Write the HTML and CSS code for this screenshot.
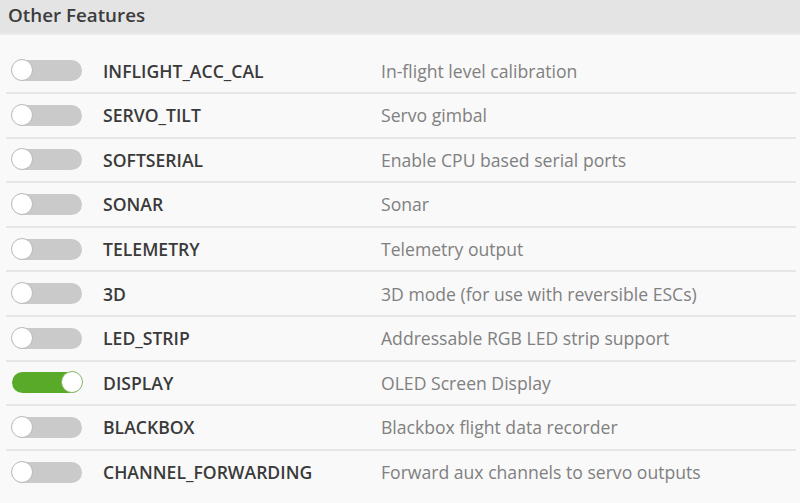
FILE: index.html
```html
<!DOCTYPE html>
<html lang="en">
<head>
    <meta charset="UTF-8">
    <title>Other Features</title>
    <link rel="stylesheet" href="styles.css">
</head>
<body>
    <div class="panel">
        <div class="panel-header">Other Features</div>
        <ul class="features">
            <li><span class="toggle"></span><span class="name">INFLIGHT_ACC_CAL</span><span class="desc">In-flight level calibration</span></li>
            <li><span class="toggle"></span><span class="name">SERVO_TILT</span><span class="desc">Servo gimbal</span></li>
            <li><span class="toggle"></span><span class="name">SOFTSERIAL</span><span class="desc">Enable CPU based serial ports</span></li>
            <li><span class="toggle"></span><span class="name">SONAR</span><span class="desc">Sonar</span></li>
            <li><span class="toggle"></span><span class="name">TELEMETRY</span><span class="desc">Telemetry output</span></li>
            <li><span class="toggle"></span><span class="name">3D</span><span class="desc">3D mode (for use with reversible ESCs)</span></li>
            <li><span class="toggle"></span><span class="name">LED_STRIP</span><span class="desc">Addressable RGB LED strip support</span></li>
            <li><span class="toggle on"></span><span class="name">DISPLAY</span><span class="desc">OLED Screen Display</span></li>
            <li><span class="toggle"></span><span class="name">BLACKBOX</span><span class="desc">Blackbox flight data recorder</span></li>
            <li><span class="toggle"></span><span class="name">CHANNEL_FORWARDING</span><span class="desc">Forward aux channels to servo outputs</span></li>
        </ul>
    </div>
</body>
</html>
```

FILE: styles.css
```css
body {
    margin: 0;
    background-color: #f9f9f9;
    font-family: 'Open Sans', 'Liberation Sans', sans-serif;
}

.panel {
    width: 800px;
}

.panel-header {
    height: 33px;
    line-height: 31px;
    padding-left: 8px;
    background-color: #e4e4e4;
    border-bottom: 2px solid #ececec;
    font-size: 18.8px;
    font-weight: 600;
    color: #3c3c3c;
}

.features {
    list-style: none;
    margin: 0;
    padding: 14.4px 4px 0 6px;
}

.features li {
    display: flex;
    align-items: center;
    height: 42.6px;
    border-bottom: 2px solid #e6e6e6;
}

.features li:last-child {
    border-bottom: none;
}

.toggle {
    position: relative;
    width: 70px;
    height: 21px;
    margin-left: 6px;
    border-radius: 11px;
    background-color: #cacaca;
    flex-shrink: 0;
}

.toggle::after {
    content: '';
    position: absolute;
    left: -1px;
    top: -1px;
    width: 20px;
    height: 20px;
    border-radius: 50%;
    background-color: #fff;
    border: 1.5px solid #b9b9b9;
}

.toggle.on {
    background-color: #59aa29;
}

.toggle.on::after {
    left: auto;
    right: -1px;
    border-color: #8ab56a;
}

.name {
    width: 278px;
    margin-left: 21px;
    font-size: 17.6px;
    font-weight: 600;
    color: #3a3a3a;
}

.desc {
    font-size: 17.6px;
    color: #808080;
}
```
